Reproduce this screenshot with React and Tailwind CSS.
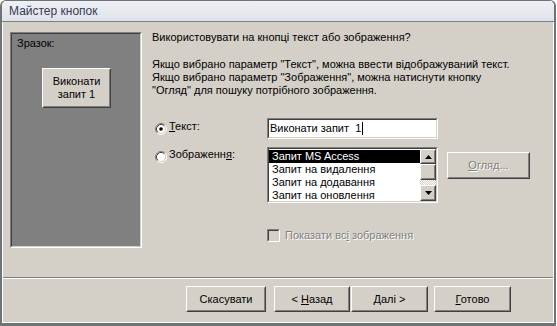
function Raised({ className = '', innerClassName = '', children }) {
  return (
    <div className={`border border-t-white border-l-white border-r-[#404040] border-b-[#404040] ${className}`}>
      <div className={`h-full w-full border border-t-[#d4d0c8] border-l-[#d4d0c8] border-r-[#808080] border-b-[#808080] bg-[#d4d0c8] ${innerClassName}`}>
        {children}
      </div>
    </div>
  )
}

function Sunken({ className = '', innerClassName = '', children }) {
  return (
    <div className={`border border-t-[#808080] border-l-[#808080] border-r-white border-b-white ${className}`}>
      <div className={`h-full w-full border border-t-[#404040] border-l-[#404040] border-r-[#d4d0c8] border-b-[#d4d0c8] ${innerClassName}`}>
        {children}
      </div>
    </div>
  )
}

function Radio({ checked }) {
  return (
    <svg width="12" height="12" viewBox="0 0 12 12" className="shrink-0">
      <circle cx="6" cy="6" r="4.5" fill="#fff" />
      <path d="M2.11 9.89A5.5 5.5 0 0 1 9.89 2.11" fill="none" stroke="#808080" />
      <path d="M9.89 2.11A5.5 5.5 0 0 1 2.11 9.89" fill="none" stroke="#fff" />
      <path d="M2.82 9.18A4.5 4.5 0 0 1 9.18 2.82" fill="none" stroke="#404040" />
      <path d="M9.18 2.82A4.5 4.5 0 0 1 2.82 9.18" fill="none" stroke="#d4d0c8" />
      {checked && <circle cx="6" cy="6" r="1.8" fill="#000" />}
    </svg>
  )
}

function Arrow({ down }) {
  return (
    <svg width="7" height="4" viewBox="0 0 7 4">
      {down ? <polygon points="0,0 7,0 3.5,4" fill="#000" /> : <polygon points="0,4 7,4 3.5,0" fill="#000" />}
    </svg>
  )
}

const items = ['Запит MS Access', 'Запит на видалення', 'Запит на додавання', 'Запит на оновлення']

export default function App() {
  return (
    <div className="w-[557px] h-[326px] bg-white font-['Liberation_Sans',Arial,sans-serif] text-[11px] leading-[13px] text-black">
      <div className="w-[556px] h-[326px] flex flex-col rounded-t-[6px] overflow-hidden border-t border-l-2 border-r-2 border-b-[3px] border-[#6e7378]">
        {/* title bar */}
        <div className="h-[21px] shrink-0 flex items-center pl-[7px] border-b border-[#7d8186] bg-gradient-to-b from-[#eef0f4] to-[#dfe3e9]">
          <span className="text-[12px] text-[#373a56]">Майстер кнопок</span>
        </div>

        {/* client */}
        <div className="flex-1 flex flex-col bg-[#d4d0c8] border-l border-r border-b border-white">
          <div className="h-[255px] flex">
            {/* sample panel */}
            <Sunken className="ml-[7px] mt-[10px] w-[132px] h-[216px] shrink-0" innerClassName="bg-[#808080] pl-[5px] pt-[3px]">
              <p>Зразок:</p>
              <Raised className="ml-[25px] mt-[18px] w-[69px] h-[40px]" innerClassName="flex flex-col items-center justify-center">
                <span>Виконати</span>
                <span>запит 1</span>
              </Raised>
            </Sunken>

            {/* options */}
            <div className="ml-[10px] flex flex-col">
              <p className="mt-[9px]">Використовувати на кнопці текст або зображення?</p>
              <p className="mt-[14px]">
                Якщо вибрано параметр "Текст", можна ввести відображуваний текст.
                <br />
                Якщо вибрано параметр "Зображення", можна натиснути кнопку
                <br />
                "Огляд" для пошуку потрібного зображення.
              </p>

              <div className="mt-[21px] flex h-[21px]">
                <div className="w-[115px] shrink-0 flex items-start pl-[3px] pt-[2px]">
                  <div className="mt-[3px]">
                    <Radio checked />
                  </div>
                  <span className="ml-[2px]">
                    <span className="underline">Т</span>екст:
                  </span>
                </div>
                <Sunken className="w-[171px] h-[21px]" innerClassName="bg-white flex items-center pl-[1px]">
                  <span>Виконати запит&nbsp; 1</span>
                  <span className="inline-block w-px h-[13px] bg-black ml-[1px]" />
                </Sunken>
              </div>

              <div className="mt-[8px] flex">
                <div className="w-[115px] shrink-0 flex items-start pl-[3px] pt-[1px]">
                  <div className="mt-[3px]">
                    <Radio />
                  </div>
                  <span className="ml-[2px]">
                    Зображенн<span className="underline">я</span>:
                  </span>
                </div>
                <Sunken className="w-[171px] h-[56px] shrink-0" innerClassName="bg-white flex overflow-hidden">
                  <div className="flex-1 flex flex-col overflow-hidden pt-[1px]">
                    {items.map((it, i) => (
                      <div
                        key={it}
                        className={`h-[13px] shrink-0 pl-[3px] whitespace-nowrap ${i === 0 ? 'bg-black text-white' : ''}`}
                      >
                        {it}
                      </div>
                    ))}
                  </div>
                  <div className="w-[16px] shrink-0 flex flex-col">
                    <Raised className="h-[15px]" innerClassName="flex items-center justify-center">
                      <Arrow />
                    </Raised>
                    <Raised className="h-[16px]" />
                    <div className="h-[5px] bg-[repeating-conic-gradient(#d4d0c8_0_25%,#ffffff_0_50%)] bg-[length:2px_2px]" />
                    <Raised className="h-[16px]" innerClassName="flex items-center justify-center">
                      <Arrow down />
                    </Raised>
                  </div>
                </Sunken>
                <Raised className="ml-[9px] mt-[5px] w-[83px] h-[27px]" innerClassName="flex items-center justify-center">
                  <span className="text-[#808080] [text-shadow:1px_1px_0_#ffffff]">
                    <span className="underline">О</span>гляд...
                  </span>
                </Raised>
              </div>

              <div className="mt-[26px] ml-[115px] flex items-center">
                <Sunken className="w-[13px] h-[13px]" innerClassName="bg-[#d4d0c8]" />
                <span className="ml-[5px] text-[#808080] [text-shadow:1px_1px_0_#ffffff]">
                  Показати вс<span className="underline">і</span> зображення
                </span>
              </div>
            </div>
          </div>

          {/* separator */}
          <div className="border-t border-b border-t-[#808080] border-b-white" />

          {/* buttons */}
          <div className="mt-[7px] flex justify-end pr-[42px]">
            <Raised className="w-[80px] h-[26px]" innerClassName="flex items-center justify-center">
              Скасувати
            </Raised>
            <Raised className="ml-[8px] w-[76px] h-[26px]" innerClassName="flex items-center justify-center">
              <span>
                &lt; <span className="underline">Н</span>азад
              </span>
            </Raised>
            <Raised className="ml-[1px] w-[77px] h-[26px]" innerClassName="flex items-center justify-center">
              <span>
                <span className="underline">Д</span>алі &gt;
              </span>
            </Raised>
            <Raised className="ml-[6px] w-[77px] h-[26px]" innerClassName="flex items-center justify-center">
              <span>
                <span className="underline">Г</span>отово
              </span>
            </Raised>
          </div>
        </div>
      </div>
    </div>
  )
}
